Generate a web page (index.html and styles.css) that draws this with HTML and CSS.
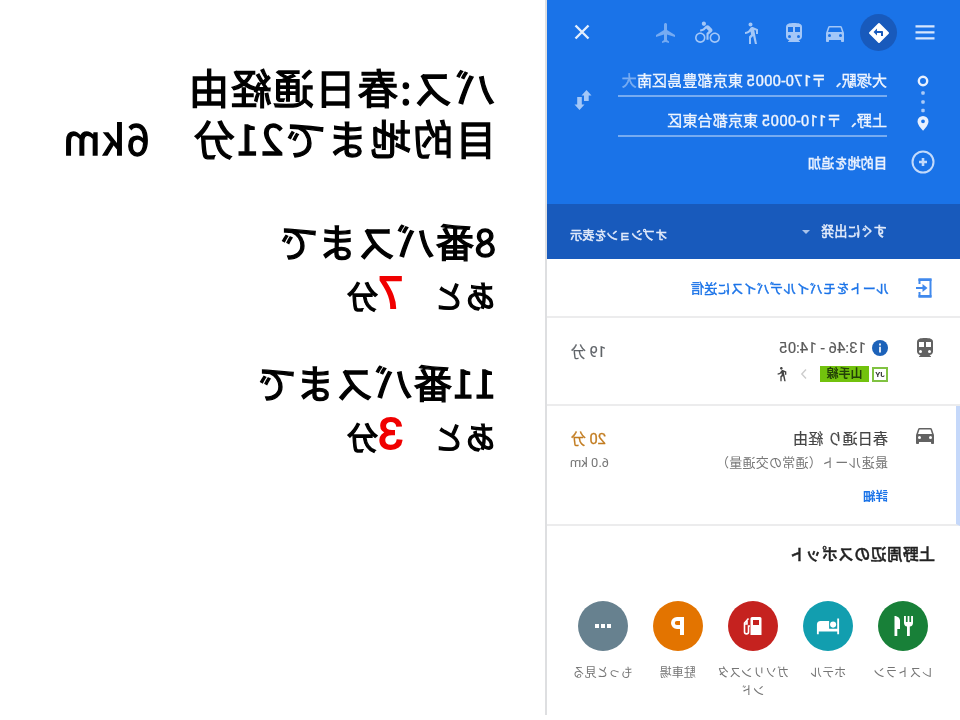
FILE: index.html
```html
<!DOCTYPE html>
<html lang="ja">
<head>
<meta charset="utf-8">
<title>大塚駅 → 上野</title>
<link rel="stylesheet" href="styles.css">
</head>
<body>
<div class="mirror">
  <aside class="panel">
    <header class="head">
      <nav class="modes">
        <svg class="menu" viewBox="0 0 24 24"><path d="M2.500 4.200h19v2.400h-19zM2.500 10.200h19v2.400h-19zM2.500 16.200h19v2.400h-19z"/></svg>
        <span class="active"><svg viewBox="0 0 24 24"><path d="M21.71 11.29l-9-9a1 1 0 0 0-1.41 0l-9 9a1 1 0 0 0 0 1.41l9 9c.39.39 1.02.39 1.41 0l9-9a1 1 0 0 0 0-1.41zM14 14.500V12h-4v3H8v-4c0-.55.45-1 1-1h5V7.500l3.500 3.500-3.500 3.500z"/></svg></span>
        <svg class="m-car" viewBox="0 0 24 24"><path d="M18.920 6.010C18.720 5.420 18.160 5 17.500 5h-11c-.66 0-1.210.42-1.420 1.010L3 12v8c0 .55.45 1 1 1h1c.55 0 1-.45 1-1v-1h12v1c0 .55.45 1 1 1h1c.55 0 1-.45 1-1v-8zM6.500 16a1.500 1.500 0 1 1 0-3 1.500 1.500 0 0 1 0 3zm11 0a1.500 1.500 0 1 1 0-3 1.500 1.500 0 0 1 0 3zM5 11l1.500-4.500h11L19 11z"/></svg>
        <svg class="m-train" viewBox="0 0 24 24"><path d="M12 2c-4.420 0-8 .5-8 4v9.500C4 17.430 5.570 19 7.500 19L6 20.500v.5h12v-.5L16.500 19c1.930 0 3.500-1.570 3.500-3.500V6c0-3.500-3.580-4-8-4zM7.500 17a1.500 1.500 0 1 1 0-3 1.500 1.500 0 0 1 0 3zM11 11H6V6h5zm5.500 6a1.500 1.500 0 1 1 0-3 1.500 1.500 0 0 1 0 3zM18 11h-5V6h5z"/></svg>
        <svg class="m-walk" viewBox="0 0 24 24"><path d="M13.500 5.500c1.100 0 2-.9 2-2s-.9-2-2-2-2 .9-2 2 .9 2 2 2zM9.800 8.900L7 23h2.100l1.800-8 2.100 2v6h2v-7.500l-2.100-2 .6-3C14.800 12 16.800 13 19 13v-2c-1.900 0-3.500-1-4.300-2.400l-1-1.600c-.4-.6-1-1-1.700-1-.3 0-.5.1-.8.1L6 8.300V13h2V9.600l1.800-.7"/></svg>
        <svg class="m-bike" viewBox="0 0 26 24"><g transform="translate(1 0)"><path d="M15.500 5.500c1.100 0 2-.9 2-2s-.9-2-2-2-2 .9-2 2 .9 2 2 2zM5 12c-2.800 0-5 2.200-5 5s2.200 5 5 5 5-2.200 5-5-2.200-5-5-5zm0 8.500c-1.900 0-3.500-1.600-3.500-3.500s1.600-3.500 3.500-3.500 3.500 1.600 3.500 3.500-1.600 3.500-3.500 3.500zm5.800-10l2.400-2.400.8.8c1.300 1.300 3 2.100 5.100 2.100V9c-1.500 0-2.700-.6-3.600-1.500l-1.900-1.900c-.5-.4-1-.6-1.600-.6s-1.100.2-1.400.6L7.800 8.400c-.4.4-.6.9-.6 1.400 0 .6.2 1.100.6 1.400L11 14v5h2v-6.200l-2.200-2.300zM19 12c-2.800 0-5 2.200-5 5s2.200 5 5 5 5-2.200 5-5-2.200-5-5-5zm0 8.500c-1.900 0-3.500-1.600-3.500-3.500s1.600-3.500 3.500-3.500 3.500 1.600 3.500 3.500-1.600 3.500-3.500 3.500z"/></g></svg>
        <svg class="m-plane" viewBox="0 0 24 24"><path d="M21 16v-2l-8-5V3.500c0-.83-.67-1.500-1.500-1.500S10 2.670 10 3.500V9l-8 5v2l8-2.500V19l-2 1.500V22l3.500-1 3.500 1v-1.500L13 19v-5.500l8 2.500z"/></svg>
        <svg class="close" viewBox="0 0 24 24"><path d="M5.500 5.500l13 13M18.500 5.500l-13 13"/></svg>
      </nav>
      <div class="places">
        <svg class="pins" viewBox="0 0 20 66"><circle cx="10" cy="11" r="4.200" class="ring"/><rect x="8.300" y="21.300" width="3.400" height="3.400" rx="1" opacity=".7"/><rect x="8.300" y="30.300" width="3.400" height="3.400" rx="1" opacity=".7"/><rect x="8.300" y="38.800" width="3.400" height="3.400" rx="1" opacity=".7"/><path d="M10 46a5.500 5.500 0 0 0-5.500 5.500c0 4 5.500 9.200 5.500 9.200s5.500-5.200 5.500-9.200A5.500 5.500 0 0 0 10 46zm0 7.200a1.900 1.900 0 1 1 0-3.800 1.900 1.900 0 0 1 0 3.800z"/></svg>
        <div class="fields">
          <div class="field from">大塚駅、〒170-0005 東京都豊島区南<span>大</span></div>
          <div class="field to">上野、〒110-0005 東京都台東区</div>
        </div>
        <svg class="swap" viewBox="0 0 18 22"><path d="M5.500 1L10.500 6.500H8V12H3.300V6.500H.5zM12.500 21L7.500 15.500h2.700V8h4.600v7.500h2.700z"/></svg>
      </div>
      <div class="add">
        <svg viewBox="0 0 24 24"><circle cx="12" cy="12" r="10.500"/><path d="M12 8v8M8 12h8" stroke-width="2.600"/></svg>
        <span>目的地を追加</span>
      </div>
    </header>
    <div class="options">
      <span class="depart">すぐに出発</span><i class="caret"></i>
      <span class="show">オプションを表示</span>
    </div>
    <div class="send">
      <svg viewBox="0 0 24 24"><path class="line" d="M17.500 8V3.500h-11v17h11V16"/><path d="M5.500 2.500h13V5h-13zM5.500 19h13v2.500h-13zM9.500 12l5-4v3H21v2h-6.500v3z"/></svg>
      <span>ルートをモバイルデバイスに送信</span>
    </div>
    <section class="route transit">
      <svg class="kind" viewBox="0 0 24 24"><path d="M12 2c-4.420 0-8 .5-8 4v9.500C4 17.430 5.570 19 7.500 19L6 20.500v.5h12v-.5L16.500 19c1.930 0 3.500-1.570 3.500-3.500V6c0-3.500-3.580-4-8-4zM7.500 17a1.500 1.500 0 1 1 0-3 1.500 1.500 0 0 1 0 3zM11 11H6V6h5zm5.500 6a1.500 1.500 0 1 1 0-3 1.500 1.500 0 0 1 0 3zM18 11h-5V6h5z"/></svg>
      <div class="body">
        <div class="times"><svg viewBox="0 0 16 16"><circle cx="8" cy="8" r="8"/><path d="M7 3.500h2v2H7zM7 6.800h2v5.700H7z"/></svg><span>13:46 - 14:05</span></div>
        <div class="legs"><b class="jy">JY</b><b class="line-name">山手線</b>
          <svg class="chev" viewBox="0 0 8 12"><path d="M2 1.500L6.200 6 2 10.500"/></svg>
          <svg class="leg-walk" viewBox="4 0 17 24"><path d="M13.500 5.500c1.100 0 2-.9 2-2s-.9-2-2-2-2 .9-2 2 .9 2 2 2zM9.800 8.900L7 23h2.100l1.800-8 2.100 2v6h2v-7.500l-2.100-2 .6-3C14.800 12 16.800 13 19 13v-2c-1.900 0-3.500-1-4.300-2.400l-1-1.600c-.4-.6-1-1-1.700-1-.3 0-.5.1-.8.1L6 8.300V13h2V9.600l1.800-.7"/></svg>
        </div>
      </div>
      <div class="cost"><div class="mins">19 分</div></div>
    </section>
    <section class="route drive">
      <svg class="kind" viewBox="0 0 24 24"><path d="M18.920 6.010C18.720 5.420 18.160 5 17.500 5h-11c-.66 0-1.210.42-1.420 1.010L3 12v8c0 .55.45 1 1 1h1c.55 0 1-.45 1-1v-1h12v1c0 .55.45 1 1 1h1c.55 0 1-.45 1-1v-8zM6.500 16a1.500 1.500 0 1 1 0-3 1.500 1.500 0 0 1 0 3zm11 0a1.500 1.500 0 1 1 0-3 1.500 1.500 0 0 1 0 3zM5 11l1.500-4.500h11L19 11z"/></svg>
      <div class="body">
        <div class="via">春日通り 経由</div>
        <div class="note">最速ルート（通常の交通量）</div>
        <div class="detail">詳細</div>
      </div>
      <div class="cost"><div class="mins warm">20 分</div><div class="km">6.0 km</div></div>
    </section>
    <section class="spots">
      <h2>上野周辺のスポット</h2>
      <div class="grid">
        <div class="spot"><span class="disc green"><svg viewBox="0 0 24 24"><path d="M2 2h1.900v6h1.700V2h1.800v6h1.700V2H11v7c0 2-1.300 3.200-3 3.600V22H5.200v-9.400C3.300 12.200 2 11 2 9zM20.500 2v20h-2.800v-7H15V7c0-2.500 2-5 5.500-5z"/></svg></span><p>レストラン</p></div>
        <div class="spot"><span class="disc teal"><svg viewBox="0 0 26 24"><circle cx="7.500" cy="10.500" r="3.300"/><path d="M1 4h2v11h8.800V6.500H21a4 4 0 0 1 4 4V21h-2v-3H3v3H1z"/></svg></span><p>ホテル</p></div>
        <div class="spot"><span class="disc red"><svg viewBox="0 0 24 24"><path fill-rule="evenodd" d="M5 3h8a1.500 1.500 0 0 1 1.500 1.500V21h-11V4.500A1.500 1.500 0 0 1 5 3zm1 3v5h6V6z"/><path class="hose" d="M15 12h1.500v6c0 2.500 4 2.500 4 0V9L16.500 4.500M18 7v3h2.500"/></svg></span><p>ガソリンスタンド</p></div>
        <div class="spot"><span class="disc orange"><svg viewBox="0 0 24 24"><path d="M13 3H6v18h4v-6h3a6 6 0 0 0 0-12zm.2 8H10V7h3.200a2 2 0 0 1 0 4z"/></svg></span><p>駐車場</p></div>
        <div class="spot"><span class="disc gray"><svg viewBox="0 0 24 24"><path d="M4 10h4v4H4zM10 10h4v4h-4zM16 10h4v4h-4z"/></svg></span><p>もっと見る</p></div>
      </div>
    </section>
  </aside>
  <main class="board">
    <p class="big">バス:春日通経由<br><span>目的地まで21分　6km</span></p>
    <p class="bus eight">8番バスまで</p>
    <p class="wait">あと　<em>7</em>分</p>
    <p class="bus eleven">11番バスまで</p>
    <p class="wait">あと　<em>3</em>分</p>
  </main>
</div>
</body>
</html>
```
FILE: styles.css
```css
* { box-sizing: border-box; margin: 0; padding: 0; }
body { background: #fff; overflow: hidden; font-family: Roboto, "Noto Sans CJK JP", sans-serif; }
svg { display: block; flex: none; fill: currentColor; }
.mirror { width: 960px; height: 720px; display: flex; transform: scaleX(-1); white-space: nowrap; }

.panel { width: 415px; height: 715px; border-right: 2px solid #dedfe1; flex: none; color: #5f6368; }
.head { height: 204px; background: #1a73e8; color: #d2e3fc; }
.modes { height: 65px; display: grid; grid-template-columns: 46px 46px 41px 42px 42px 46px 91px 24px; align-items: center; padding-left: 12px; justify-items: center; color: #a3c7f8; }
.modes svg { width: 24px; height: 24px; }
.modes .menu { color: #d6e6fd; }
.modes .m-bike { width: 27px; height: 25px; }
.modes .m-plane { color: #76abf2; justify-self: start; margin-left: 8px; }
.active { width: 37px; height: 37px; border-radius: 50%; background: #185abc; display: grid; place-items: center; color: #fff; }
.modes .close { fill: none; stroke: #e3eefd; stroke-width: 2.4; margin-top: -1px; }

.places { display: flex; height: 72px; }
.pins { width: 20px; height: 66px; margin: 5px 26px 0 27px; color: #e8f0fe; }
.ring { fill: none; stroke: currentColor; stroke-width: 2.4; }
.fields { width: 269px; color: #eef4fe; }
.field { border-bottom: 2px solid #76abf1; font-size: 15px; letter-spacing: .16px; -webkit-text-stroke: .35px; overflow: hidden; }
.from { height: 32px; line-height: 33px; }
.from span { opacity: .45; }
.to { height: 40px; line-height: 49px; }
.swap { width: 18px; height: 22px; margin: 24px 0 0 26px; color: #a3c7f8; }
.add { display: flex; align-items: center; height: 50px; padding-left: 25px; font-size: 13.2px; font-weight: 500; }
.add span { color: #e8f0fe; -webkit-text-stroke: .3px; }
.add svg { width: 24px; height: 24px; margin-right: 24px; fill: none; stroke: #c3dafb; stroke-width: 2; }

.options { height: 55px; background: #185abc; color: #e1eafa; display: flex; align-items: center; padding-left: 73px; font-size: 13.2px; -webkit-text-stroke: .5px; }
.depart { margin: -3px 11px 0 0; }
.caret { border: 4px solid transparent; border-top-color: #a9c3ea; border-bottom: 0; }
.show { margin-left: auto; margin-right: 23px; padding-top: 6px; font-size: 12.2px; }

.send { height: 59px; border-bottom: 2px solid #ececed; display: flex; align-items: center; padding-left: 23px; color: #1a73e8; font-size: 13px; -webkit-text-stroke: .4px; }
.send svg { width: 24px; height: 24px; margin-right: 24px; color: #4089ed; }
.send span { letter-spacing: .25px; margin-top: -1px; }
.line { fill: none; stroke: currentColor; stroke-width: 2; }

.route { display: flex; border-bottom: 2px solid #ececed; }
.route .kind { width: 24px; height: 24px; color: #626262; }
.body { margin-left: 25px; }
.cost { width: 40px; margin-left: auto; margin-right: 19px; }
.transit { height: 88px; padding: 17px 0 0 23px; }
.times { display: flex; align-items: center; height: 25px; gap: 6px; font-size: 15.1px; color: #5b5b5b; -webkit-text-stroke: .2px; }
.times svg { width: 16px; height: 16px; fill: #1c62b9; }
.times svg path { fill: #dbe7f5; }
.transit .kind { margin-top: 1px; }
.legs { display: flex; align-items: center; height: 28px; }
.jy { width: 16px; height: 15px; border: 2px solid #80c241; font-size: 8px; line-height: 11px; text-align: center; color: #333; }
.line-name { width: 49px; height: 16px; margin-left: 3px; background: #72c20d; color: #234008; font-size: 12px; line-height: 16px; display: flex; align-items: center; justify-content: center; }
.chev { width: 8px; height: 12px; margin: 0 12px 0 12px; fill: none; stroke: #ccc; stroke-width: 1.4; }
.leg-walk { width: 12px; height: 16px; color: #444; }
.mins { font-size: 14.8px; line-height: 26px; -webkit-text-stroke: .2px; }
.transit .mins { padding-top: 4px; }
.drive { height: 120px; padding: 17px 0 0 19px; border-left: 4px solid #c5d8fa; }
.via { font-size: 15px; line-height: 32px; color: #454545; letter-spacing: .2px; -webkit-text-stroke: .2px; }
.note { font-size: 13px; line-height: 16px; letter-spacing: .25px; color: #777; }
.detail { margin-top: 17px; font-size: 12.5px; line-height: 18px; color: #1a73e8; font-weight: 700; }
.warm { color: #c27c20; -webkit-text-stroke: .3px; line-height: 32px; }
.km { font-size: 13px; line-height: 15px; margin-left: -3px; color: #777; }

.spots h2 { padding-left: 25px; height: 56px; line-height: 57px; font-size: 16px; letter-spacing: .2px; font-weight: 500; color: #222; -webkit-text-stroke: .4px; }
.grid { display: grid; grid-template-columns: repeat(5, 75.2px); padding: 18.500px 0 0 19px; }
.spot { display: flex; flex-direction: column; align-items: center; }
.spot p { width: 73px; margin-top: 13.500px; font-size: 12px; line-height: 18px; text-align: center; color: #757575; white-space: normal; word-break: break-all; }
.disc { width: 50px; height: 50px; border-radius: 50%; display: grid; place-items: center; color: #fff; }
.disc svg { width: 24px; height: 24px; }
.hose { fill: none; stroke: currentColor; stroke-width: 1.6; }
.green { background: #188038; }
.teal { background: #129eaf; }
.red { background: #c5221f; }
.orange { background: #e37400; }
.gray { background: #67818f; }

.board { flex: 1; padding: 61px 0 0 49px; color: #000; font-family: "Noto Sans CJK JP", sans-serif; -webkit-text-stroke: 1.3px #000; }
.big { font-size: 40.500px; line-height: 51px; height: 102px; letter-spacing: 1.8px; }
.big span { letter-spacing: 2px; }
.bus { font-size: 38.500px; line-height: 54px; height: 54px; letter-spacing: .5px; }
.eight { margin-top: 50px; }
.wait { font-size: 30.500px; line-height: 56px; height: 52px; letter-spacing: .4px; }
.eleven { margin-top: 35px; }
.wait em { font: normal 45px/40px "Liberation Sans", sans-serif; color: #f00000; -webkit-text-stroke: 1.800px #f00000; }
```
